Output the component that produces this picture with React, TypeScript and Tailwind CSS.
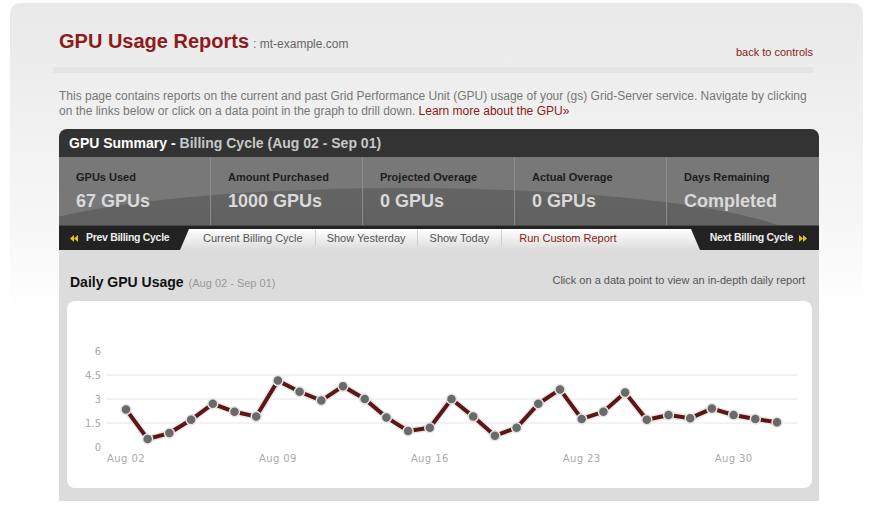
import React from 'react';

// Daily usage for the billing cycle (Aug 02 - Sep 01)
const usage = [
  2.35, 0.5, 0.87, 1.7, 2.7, 2.2, 1.9, 4.15, 3.45, 2.9, 3.8, 3.0, 1.85, 1.0, 1.2, 3.0,
  1.9, 0.7, 1.2, 2.7, 3.6, 1.75, 2.2, 3.4, 1.7, 2.0, 1.8, 2.4, 2.0, 1.75, 1.55,
];

const stats = [
  { label: 'GPUs Used', value: '67 GPUs' },
  { label: 'Amount Purchased', value: '1000 GPUs' },
  { label: 'Projected Overage', value: '0 GPUs' },
  { label: 'Actual Overage', value: '0 GPUs' },
  { label: 'Days Remaining', value: 'Completed' },
];

function Arrows({ dir }: { dir: 'left' | 'right' }) {
  const pts =
    dir === 'left'
      ? ['4,0 4,7 0,3.5', '8,0 8,7 4,3.5']
      : ['0,0 0,7 4,3.5', '4,0 4,7 8,3.5'];
  return (
    <svg width="9" height="7" viewBox="0 0 9 7">
      {pts.map((p) => (
        <polygon key={p} points={p} fill="#e8c21a" />
      ))}
    </svg>
  );
}

function UsageChart() {
  const x = (i: number) => 59 + i * 21.7;
  const y = (v: number) => 146 - v * 16;
  const line = usage.map((v, i) => `${x(i)},${y(v)}`).join(' ');
  const ticks = [
    { v: 6, t: '6' },
    { v: 4.5, t: '4.5' },
    { v: 3, t: '3' },
    { v: 1.5, t: '1.5' },
    { v: 0, t: '0' },
  ];
  const days = ['Aug 02', 'Aug 09', 'Aug 16', 'Aug 23', 'Aug 30'];

  return (
    <svg width="745" height="187" viewBox="0 0 745 187" style={{ fontFamily: '"DejaVu Sans", sans-serif' }}>
      {[4.5, 3, 1.5].map((v) => (
        <line key={v} x1="40" x2="730" y1={y(v)} y2={y(v)} stroke="#e6e6e6" strokeWidth="1" />
      ))}
      {ticks.map((t) => (
        <text key={t.t} x="34" y={y(t.v) + 3.5} textAnchor="end" fontSize="10" fill="#aaa">
          {t.t}
        </text>
      ))}
      {days.map((d, i) => (
        <text key={d} x={x(i * 7)} y="161" textAnchor="middle" fontSize="10" fill="#aaa" letterSpacing="0.4">
          {d}
        </text>
      ))}
      <polyline points={line} fill="none" stroke="#e8e8e8" strokeWidth="7" strokeLinejoin="round" />
      <polyline points={line} fill="none" stroke="#5c1616" strokeWidth="4" strokeLinejoin="miter" />
      {usage.map((v, i) => (
        <circle key={i} cx={x(i)} cy={y(v)} r="5" fill="#6a6a6a" stroke="#e6e6e6" strokeWidth="1.5" />
      ))}
    </svg>
  );
}

function App() {
  return (
    <div className="w-[873px] h-[511px] bg-white pt-[3px] px-[10px] overflow-hidden font-['Liberation_Sans',Arial,sans-serif]">
      <div className="h-[520px] rounded-t-[10px] bg-linear-to-b from-[#e9e9e9] via-[#f6f6f6] via-40% to-white to-60% pl-[49px]">
        <div className="w-[760px]">
          {/* Header */}
          <div className="flex justify-between items-end pt-[26px]">
            <div className="flex items-baseline">
              <span className="text-[20px] font-bold text-[#8e1b1b] leading-[24px]">GPU Usage Reports</span>
              <span className="text-[12px] text-[#666] ml-[4px]">: mt-example.com</span>
            </div>
            <a className="text-[11px] text-[#8b1a1a] mr-[6px] mb-[-7px]">back to controls</a>
          </div>
          <div className="h-[6px] w-[760px] ml-[-6px] mt-[14px] bg-[#e4e4e4]" />
          <p className="mt-[16px] text-[12px] leading-[14.5px] text-[#777]">
            This page contains reports on the current and past Grid Performance Unit (GPU) usage of your (gs)
            Grid-Server service. Navigate by clicking on the links below or click on a data point in the graph to
            drill down. <span className="text-[#8b1a1a]">Learn more about the GPU»</span>
          </p>

          {/* Summary panel */}
          <div className="mt-[11px]">
            <div className="h-[28px] rounded-t-[8px] bg-[#333] flex items-center pl-[10px] text-[14px] font-bold">
              <span className="text-white">GPU Summary -</span>
              <span className="text-[#c8c8c8] ml-[4px]">Billing Cycle (Aug 02 - Sep 01)</span>
            </div>
            <div className="relative h-[68px] bg-[#787878] overflow-hidden">
              <div className="absolute left-[-60px] right-[10px] top-[31px] h-[120px] rounded-[50%] bg-linear-to-b from-[#646464] to-[#5a5a5a]" />
              <div className="relative grid grid-cols-5 h-full">
                {stats.map((s, i) => (
                  <div key={s.label} className={`pl-[17px] pt-[13px] ${i < 4 ? 'border-r border-[#8c8c8c]' : ''}`}>
                    <div className="text-[11px] font-bold text-[#1c1c1c] leading-[14px]">{s.label}</div>
                    <div className="text-[18px] font-bold text-[#d9d9d9] leading-[22px] mt-[6px]">{s.value}</div>
                  </div>
                ))}
              </div>
            </div>

            {/* Tabs */}
            <div className="flex h-[25px] bg-[#222] border-t border-[#4a4a4a]">
              <div className="w-[121px] flex items-center pl-[11px] gap-[7px]">
                <Arrows dir="left" />
                <span className="text-[10.5px] font-bold text-[#eee] tracking-[-0.3px]">Prev Billing Cycle</span>
              </div>
              <div className="flex-1 mt-[3px] pb-[3px] rounded-t-[8px] bg-linear-to-b from-white to-[#dcdcdc] [clip-path:polygon(9px_0,calc(100%-9px)_0,100%_100%,0_100%)] flex items-center pl-[11px] text-[11px] text-[#555]">
                <span className="px-[12px] border-r border-[#cfcfcf]">Current Billing Cycle</span>
                <span className="px-[11px] border-r border-[#cfcfcf]">Show Yesterday</span>
                <span className="px-[12px] border-r border-[#cfcfcf]">Show Today</span>
                <span className="pl-[17px] text-[#8b1a1a]">Run Custom Report</span>
              </div>
              <div className="w-[119px] flex items-center justify-end pr-[11px] gap-[6px]">
                <span className="text-[10.5px] font-bold text-[#eee] tracking-[-0.3px]">Next Billing Cycle</span>
                <Arrows dir="right" />
              </div>
            </div>

            {/* Daily usage */}
            <div className="bg-[#dcdcdc] pt-[22px] pb-[13px] pl-[8px] pr-[7px]">
              <div className="flex justify-between items-baseline pl-[3px] pr-[7px] mb-[8px]">
                <div className="flex items-baseline">
                  <span className="text-[14px] font-bold text-[#111]">Daily GPU Usage</span>
                  <span className="text-[11px] text-[#999] ml-[5px]">(Aug 02 - Sep 01)</span>
                </div>
                <span className="text-[11px] text-[#555] relative top-[-3px]">Click on a data point to view an in-depth daily report</span>
              </div>
              <div className="bg-white rounded-[8px] h-[187px]">
                <UsageChart />
              </div>
            </div>
          </div>
        </div>
      </div>
    </div>
  );
}

export default App;
